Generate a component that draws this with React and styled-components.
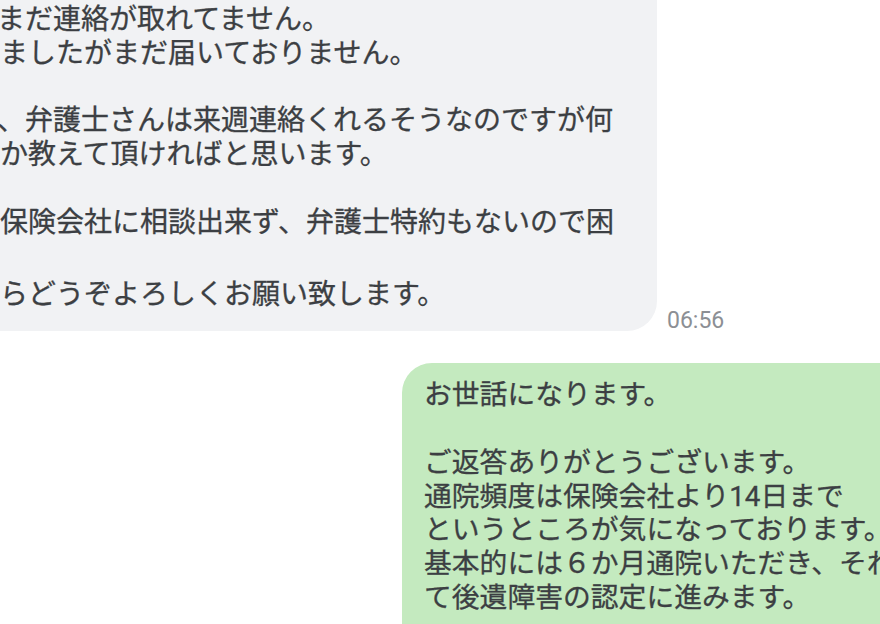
import React from "react";
import styled, { createGlobalStyle } from "styled-components";

const Global = createGlobalStyle`
  html, body {
    margin: 0;
    padding: 0;
    background: #ffffff;
    overflow: hidden;
  }
  body {
    font-family: Roboto, "Noto Sans CJK JP", sans-serif;
  }
`;

const Page = styled.div`
  width: 880px;
  height: 624px;
  overflow: hidden;
  display: flex;
  flex-direction: column;
  background: #ffffff;
`;

const IncomingRow = styled.div`
  display: flex;
  align-items: flex-end;
  gap: 10px;
`;

const IncomingBubble = styled.div`
  flex-shrink: 0;
  width: 657px;
  box-sizing: border-box;
  background: #f1f2f4;
  border-radius: 0 0 30px 0;
  padding: 3px 0 19px 0;
  overflow: hidden;
`;

const OutgoingRow = styled.div`
  display: flex;
  margin-top: 32px;
  padding-left: 402px;
`;

const OutgoingBubble = styled.div`
  flex-shrink: 0;
  width: 620px;
  box-sizing: border-box;
  background: #c4eabf;
  border-radius: 30px 0 0 0;
  padding: 15px 0 40px 22px;
`;

const Text = styled.div`
  font-family: Roboto, "Noto Sans CJK JP", sans-serif;
  font-size: ${(p) => p.$size}px;
  line-height: 33.8px;
  color: #3c3f43;
  -webkit-text-stroke: 0.3px #3c3f43;
  white-space: pre;
`;

const Line = styled.span`
  display: block;
  min-height: 33.8px;
  margin-top: ${(p) => p.$shift || 0}px;
  text-indent: ${(p) => p.$indent || 0}px;
`;

const Time = styled.span`
  font-family: Roboto, "Noto Sans", sans-serif;
  font-size: 23px;
  line-height: 20px;
  color: #8c8f94;
  flex-shrink: 0;
`;

const incoming = [
  { t: "まだ連絡が取れてません。", indent: -3 },
  { t: "ましたがまだ届いておりません。" },
  { t: "" },
  { t: "、弁護士さんは来週連絡くれるそうなのですが何", indent: -3 },
  { t: "か教えて頂ければと思います。" },
  { t: "" },
  { t: "保険会社に相談出来ず、弁護士特約もないので困" },
  { t: "" },
  { t: "らどうぞよろしくお願い致します。", shift: 5 },
];

const outgoing = [
  "お世話になります。",
  "",
  "ご返答ありがとうございます。",
  "通院頻度は保険会社より14日まで",
  "というところが気になっております。",
  "基本的には６か月通院いただき、それから",
  "て後遺障害の認定に進みます。",
];

export default function App() {
  return (
    <>
      <Global />
      <Page>
        <IncomingRow>
          <IncomingBubble>
            <Text $size={28}>
              {incoming.map((l, i) => (
                <Line key={i} $shift={l.shift} $indent={l.indent}>
                  {l.t}
                </Line>
              ))}
            </Text>
          </IncomingBubble>
          <Time>06:56</Time>
        </IncomingRow>
        <OutgoingRow>
          <OutgoingBubble>
            <Text $size={27.8}>
              {outgoing.map((l, i) => (
                <Line key={i}>{l}</Line>
              ))}
            </Text>
          </OutgoingBubble>
        </OutgoingRow>
      </Page>
    </>
  );
}
